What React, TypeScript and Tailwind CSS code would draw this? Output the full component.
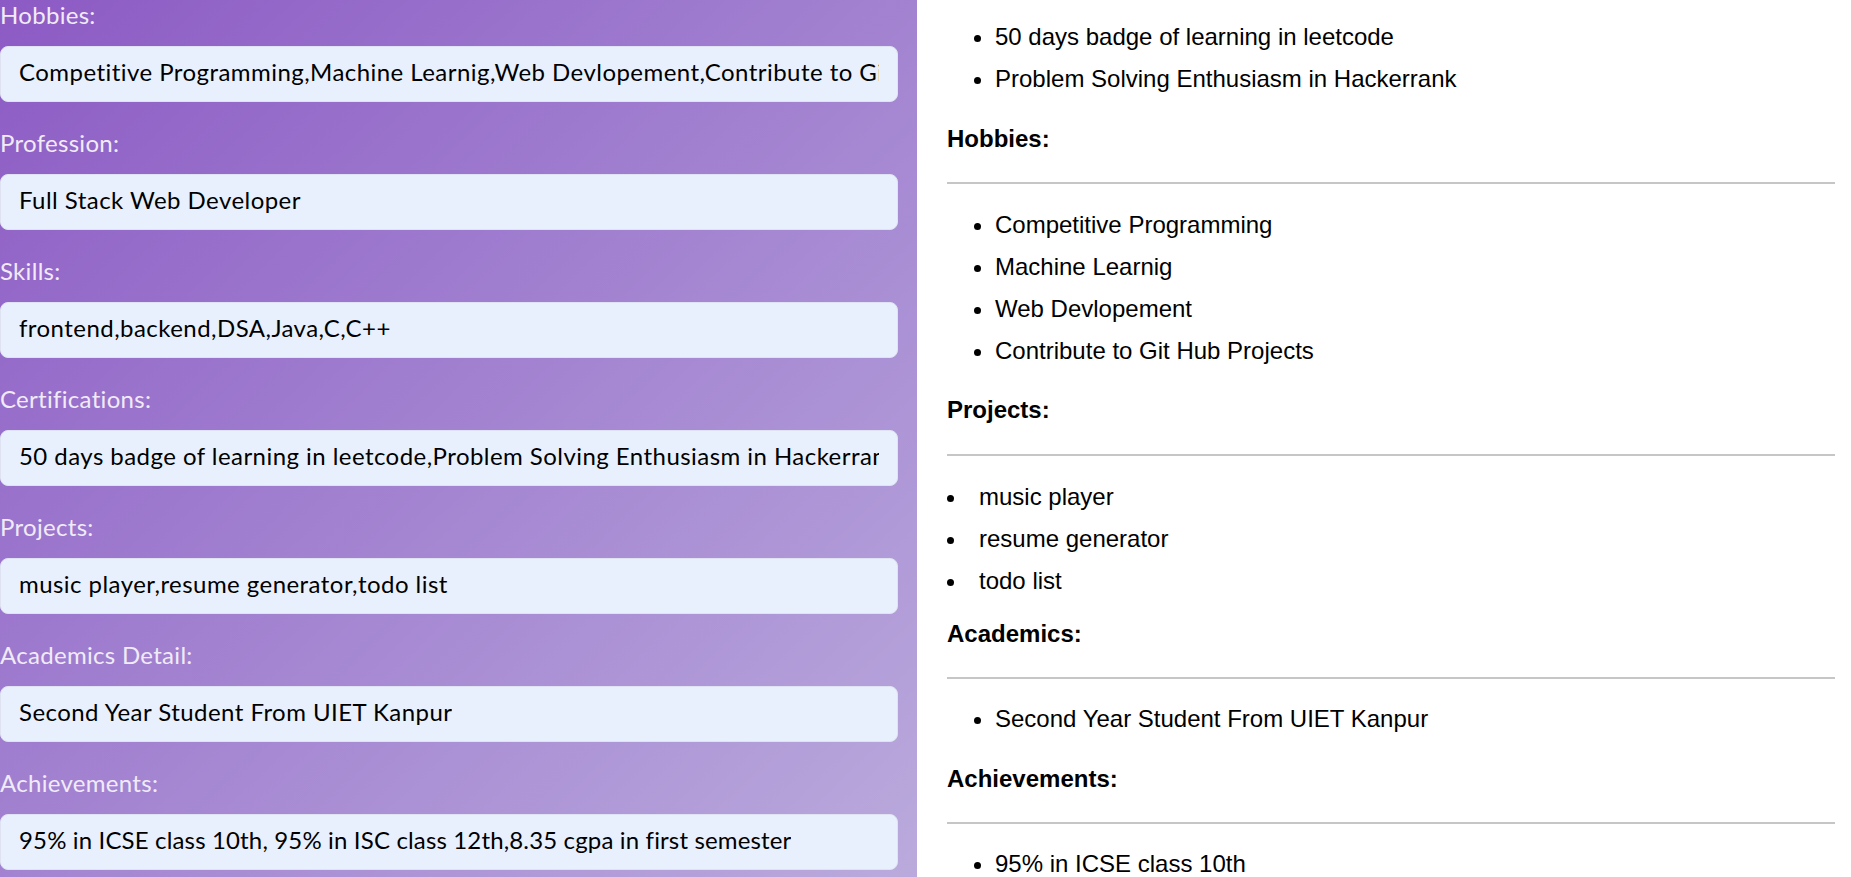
import React from "react";

const leftSections: [string, string, string][] = [
  ["Hobbies:", "Competitive Programming,Machine Learnig,Web Devlopement,Contribute to Git Hub Projects", "tracking-[0.45px]"],
  ["Profession:", "Full Stack Web Developer", "tracking-[0.45px]"],
  ["Skills:", "frontend,backend,DSA,Java,C,C++", "tracking-[0.45px]"],
  ["Certifications:", "50 days badge of learning in leetcode,Problem Solving Enthusiasm in Hackerrank", "tracking-[0.45px]"],
  ["Projects:", "music player,resume generator,todo list", "tracking-[0.45px]"],
  ["Academics Detail:", "Second Year Student From UIET Kanpur", "tracking-[0.45px]"],
  ["Achievements:", "95% in ICSE class 10th, 95% in ISC class 12th,8.35 cgpa in first semester", "tracking-[0.15px]"],
];

function Item({ text, tight }: { text: string; tight?: boolean }) {
  return (
    <li className="flex h-[42px] leading-[42px]">
      {tight ? (
        <div className="w-[32px] shrink-0">
          <div className="mt-[19px] h-[7px] w-[7px] rounded-full bg-black" />
        </div>
      ) : (
        <div className="w-[48px] shrink-0 pl-[27px]">
          <div className="mt-[19px] h-[7px] w-[7px] rounded-full bg-black" />
        </div>
      )}
      <span className="whitespace-nowrap">{text}</span>
    </li>
  );
}

function Heading({ text, mt }: { text: string; mt: string }) {
  return <div className={`${mt} h-[28px] leading-[28px] font-bold`}>{text}</div>;
}

function Rule({ mt }: { mt: string }) {
  return <div className={`${mt} h-[2px] bg-[#c6c6c6]`} />;
}

export default function App() {
  return (
    <div className="flex h-[877px] w-full overflow-hidden bg-white">
      <div
        className="w-[917px] shrink-0 bg-linear-to-br from-[#8c5ac4] to-[#baaadc] pr-[19px]"
        style={{ fontFamily: "Lato, 'Noto Sans', sans-serif" }}
      >
        {leftSections.map(([label, value, track]) => (
          <div key={label} className="h-[128px]">
            <div className="h-[30px] text-[24px] leading-[30px] tracking-[0.3px] text-[#f1ebf8]">{label}</div>
            <div className="mt-[16px] flex h-[56px] items-center rounded-[8px] border border-[#dfe3f1] bg-[#e8f0fe] px-[18px] pb-[5px]">
              <div className={`overflow-hidden whitespace-nowrap text-[24px] text-black ${track}`}>{value}</div>
            </div>
          </div>
        ))}
      </div>
      <div
        className="flex-1 pl-[30px] pr-[16px] text-[24px] text-black"
        style={{ fontFamily: "'Liberation Sans', Arial, sans-serif" }}
      >
        <ul className="mt-[16px]">
          <Item text="50 days badge of learning in leetcode" />
          <Item text="Problem Solving Enthusiasm in Hackerrank" />
        </ul>
        <Heading text="Hobbies:" mt="mt-[25px]" />
        <Rule mt="mt-[29px]" />
        <ul className="mt-[20px]">
          <Item text="Competitive Programming" />
          <Item text="Machine Learnig" />
          <Item text="Web Devlopement" />
          <Item text="Contribute to Git Hub Projects" />
        </ul>
        <Heading text="Projects:" mt="mt-[24px]" />
        <Rule mt="mt-[30px]" />
        <ul className="mt-[20px]">
          <Item text="music player" tight />
          <Item text="resume generator" tight />
          <Item text="todo list" tight />
        </ul>
        <Heading text="Academics:" mt="mt-[18px]" />
        <Rule mt="mt-[29px]" />
        <ul className="mt-[19px]">
          <Item text="Second Year Student From UIET Kanpur" />
        </ul>
        <Heading text="Achievements:" mt="mt-[25px]" />
        <Rule mt="mt-[29px]" />
        <ul className="mt-[19px]">
          <Item text="95% in ICSE class 10th" />
          <Item text="95% in ISC class 12th" />
          <Item text="8.35 cgpa in first semester" />
        </ul>
      </div>
    </div>
  );
}
